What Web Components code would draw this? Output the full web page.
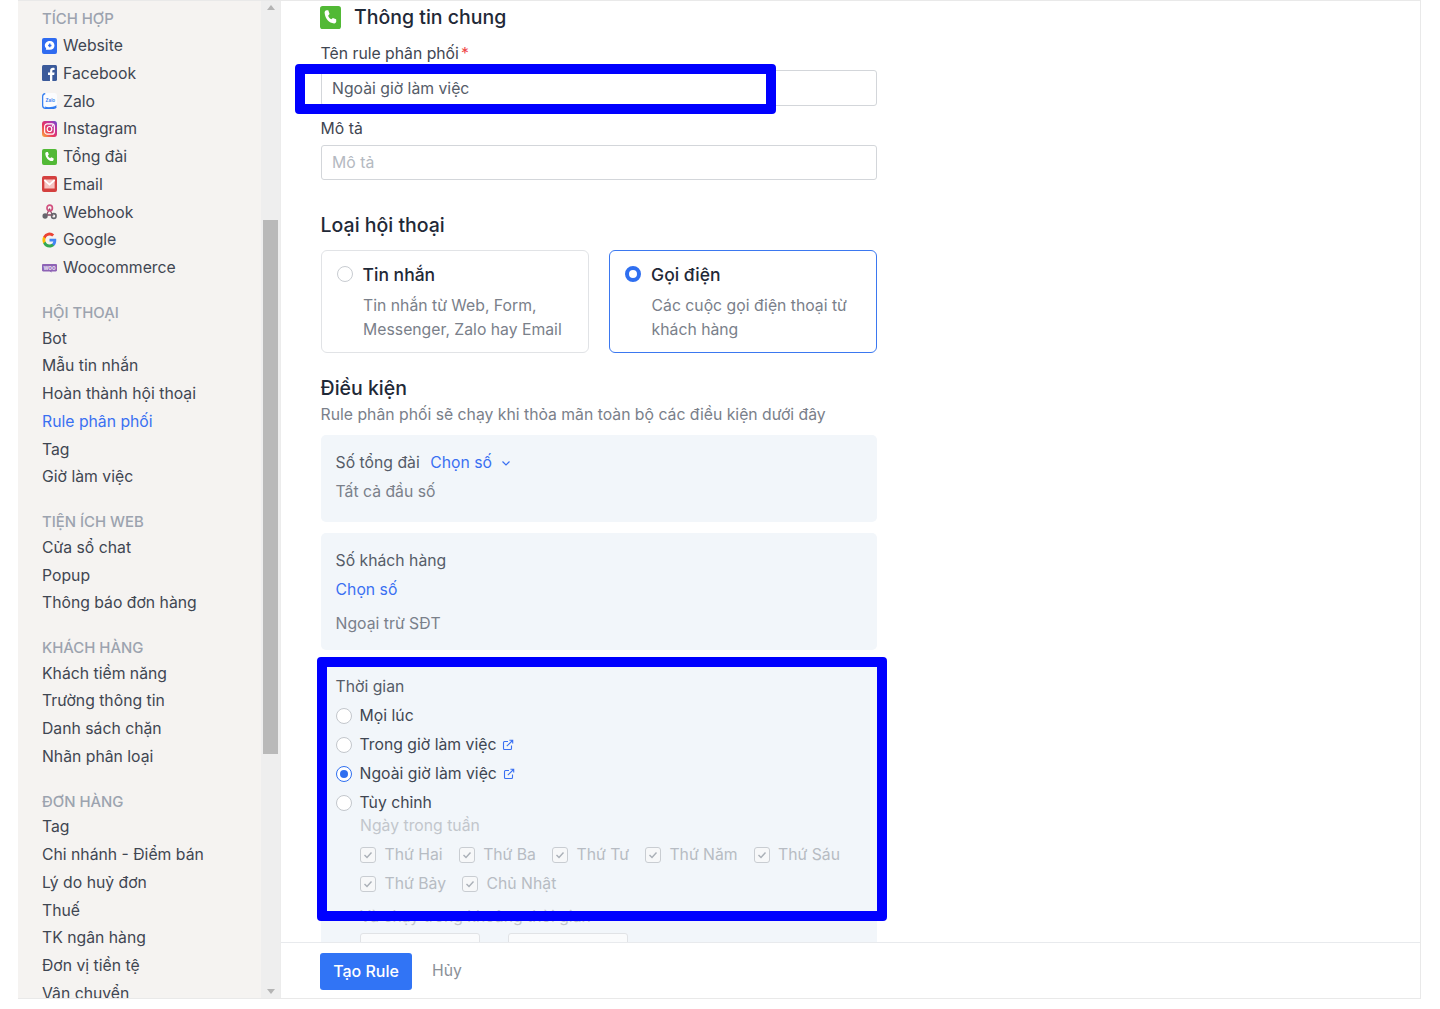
<!DOCTYPE html>
<html lang="vi">
<head>
<meta charset="utf-8">
<title>Tạo Rule</title>
<style>
  html, body { margin: 0; padding: 0; background: #fff; height: 1009px; overflow: hidden; }
  body { font-family: Inter, "Noto Sans", sans-serif; color: #374151; position: relative; }
</style>
</head>
<body>
<template id="icons">
  <svg data-i="website" viewBox="0 0 16 16" preserveAspectRatio="none"><rect width="16" height="16" rx="2" fill="#2f6bf0"/><path d="M8.500 3c2.800 0 4.800 1.900 4.800 4.400s-2 4.400-4.800 4.400H4c.5-.6.600-1.100.2-1.700C3.400 9.300 3 8.400 3 7.400 3 4.900 5.500 3 8.500 3z" fill="#fff"/><path d="M8.300 5.600v3.600M6.500 7.400h3.600" stroke="#2f6bf0" stroke-width="1.500"/></svg>
  <svg data-i="facebook" viewBox="0 0 16 16" preserveAspectRatio="none"><rect width="16" height="16" rx="1.500" fill="#3b5a9a"/><path d="M11 16v-6h2l.4-2.400H11V6.200c0-.8.300-1.200 1.200-1.200h1.200V2.900c-.4-.1-1-.1-1.700-.1-1.900 0-3.100 1.100-3.100 3.100v1.700H6.400V10h2.100v6z" fill="#fff"/></svg>
  <svg data-i="zalo" viewBox="0 0 16 16" preserveAspectRatio="none"><rect width="16" height="16" rx="2.500" fill="#fbfcfe"/><path d="M3.500 .7C1.700 .9.700 1.900.7 3.500v9c0 1.800 1.100 2.800 2.800 2.800h9c1.300 0 2.300-.5 2.800-1.500" fill="none" stroke="#2f7bf0" stroke-width="1.300"/><path d="M3 13.600c3.500 1.100 8 .9 12.500-1.300v1c-1.200 1.400-2.200 2-3.500 2H4.500c-.8 0-1.300-.6-1.500-1.700z" fill="#2f7bf0"/><text x="8.900" y="9.200" font-size="4.900" font-family="Inter, sans-serif" font-weight="600" text-anchor="middle" fill="#2f7bf0">Zalo</text></svg>
  <svg data-i="instagram" viewBox="0 0 16 16" preserveAspectRatio="none"><defs><linearGradient id="ig" x1="0" y1="1" x2="1" y2="0"><stop offset="0" stop-color="#fdb13c"/><stop offset=".4" stop-color="#e8365f"/><stop offset=".75" stop-color="#b935a8"/><stop offset="1" stop-color="#5b50d0"/></linearGradient></defs><rect width="16" height="16" rx="3" fill="url(#ig)"/><rect x="2.800" y="2.800" width="10.400" height="10.400" rx="2.800" fill="none" stroke="#fff" stroke-width="1.200"/><circle cx="8" cy="8" r="2.500" fill="none" stroke="#fff" stroke-width="1.200"/><circle cx="11.200" cy="4.900" r=".8" fill="#fff"/></svg>
  <svg data-i="phone" viewBox="0 0 16 16" preserveAspectRatio="none"><rect width="16" height="16" rx="2" fill="#52b936"/><path d="M5 2.900l1.300.1 1 2.600-1.100 1.100c.5 1.100 1.300 2 2.500 2.600l1.100-1 2.500 1 .1 1.300c0 .8-.8 1.600-1.700 1.500C6.900 11.800 4 8.900 3.500 4.700c-.1-.9.700-1.700 1.500-1.800z" fill="#fff"/></svg>
  <svg data-i="email" viewBox="0 0 16 16" preserveAspectRatio="none"><rect width="16" height="16" rx="2" fill="#d4403f"/><rect x="2.500" y="3.500" width="11" height="9" fill="#f6c4c2"/><path d="M2.500 4L8 8.700 13.500 4" fill="none" stroke="#fff" stroke-width="1.700"/></svg>
  <svg data-i="webhook" viewBox="0 0 16 16" preserveAspectRatio="none"><path d="M8.300 4.500L5.300 10M8 5l3.200 6H5" fill="none" stroke="#8a4a63" stroke-width="1.300"/><circle cx="8.200" cy="4" r="2.900" fill="none" stroke="#d2507f" stroke-width="1.800"/><circle cx="3.300" cy="12" r="2.800" fill="#66666d"/><circle cx="12.600" cy="12" r="2.400" fill="none" stroke="#66666d" stroke-width="1.700"/></svg>
  <svg data-i="google" viewBox="0 0 16 16" preserveAspectRatio="none"><path d="M15.200 8.200c0-.6 0-1-.1-1.500H8v2.900h4.100c-.2 1-.7 1.700-1.500 2.300v1.900H13c1.400-1.300 2.200-3.200 2.200-5.600z" fill="#4285f4"/><path d="M8 15.500c2 0 3.700-.7 5-1.800l-2.400-1.900c-.7.400-1.500.7-2.600.7-2 0-3.600-1.300-4.200-3.100H1.300v2A7.500 7.500 0 0 0 8 15.500z" fill="#34a853"/><path d="M3.800 9.400a4.500 4.500 0 0 1 0-2.800v-2H1.300a7.500 7.500 0 0 0 0 6.800z" fill="#fbbc05"/><path d="M8 3.500c1.100 0 2.100.4 2.900 1.100L13 2.500A7.500 7.500 0 0 0 1.300 4.600l2.500 2C4.400 4.800 6 3.500 8 3.500z" fill="#ea4335"/></svg>
  <svg data-i="woo" viewBox="0 0 16 16" preserveAspectRatio="none"><path d="M1.200 4h13.600c.7 0 1.200.5 1.200 1.200v5c0 .7-.5 1.200-1.200 1.200H10l.5 1.200-2.300-1.200h-7C.5 11.400 0 10.900 0 10.200v-5C0 4.500.5 4 1.200 4z" fill="#8e63b5"/><text x="8" y="9.800" font-size="6.400" font-family="Inter, sans-serif" font-weight="600" text-anchor="middle" fill="#f3ecf9">woo</text></svg>
</template>

<script>
// chung cho tat ca element: tao shadow root tu chuoi html
class BaseEl extends HTMLElement {
  constructor() {
    super();
    this.attachShadow({ mode: 'open' });
  }
  connectedCallback() {
    this.shadowRoot.innerHTML = this.view();
  }
  iconMarkup(name) {
    const tpl = document.getElementById('icons');
    const el = tpl.content.querySelector('[data-i="' + name + '"]');
    return el ? el.outerHTML : '';
  }
}

class AppFrame extends BaseEl {
  view() {
    return `<style>
      :host { display: flex; box-sizing: border-box; margin-left: 18px; width: 1403px; height: 999px;
        border-top: 1px solid #e9e9e9; border-bottom: 1px solid #e9e9e9; border-right: 1px solid #e9e9e9; }
    </style><slot></slot>`;
  }
}

class SideNav extends BaseEl {
  view() {
    return `<style>
      :host { display: flex; width: 262px; flex: none; height: 100%; background: #f5f3f1; border-right: 1px solid #ececec; box-sizing: content-box; }
      .list { width: 243px; flex: none; height: 100%; overflow: hidden; padding: 6.500px 0 0 24px; box-sizing: border-box; }
    </style>
    <div class="list"><slot></slot></div>
    <scroll-bar></scroll-bar>`;
  }
}

class ScrollBar extends BaseEl {
  view() {
    return `<style>
      :host { display: flex; flex-direction: column; align-items: center; width: 19px; flex: none; height: 100%; background: #eeeeee; }
      .up, .down { width: 0; height: 0; border: 4px solid transparent; }
      .up { border-bottom: 5px solid #b4b4b4; border-top: 0; margin-top: 4px; }
      .down { border-top: 5px solid #b4b4b4; border-bottom: 0; margin-bottom: 4px; }
      .thumb { width: 15px; height: 534px; margin-top: 210px; background: #b9b9b9; }
      .gap { flex: 1; }
    </style>
    <div class="up"></div><div class="thumb"></div><div class="gap"></div><div class="down"></div>`;
  }
}

class NavSection extends BaseEl {
  view() {
    return `<style>
      :host { display: block; margin-bottom: 18.400px; }
      .head { font-size: 14.900px; padding-top: 2.300px; line-height: 22px; color: #9ca3af; font-weight: 500; }
      :host(:first-child) .head { padding-top: 0; padding-bottom: 1.300px; margin-top: -1px; line-height: 24px; }
    </style>
    <div class="head">${this.getAttribute('label')}</div><slot></slot>`;
  }
}

class NavItem extends BaseEl {
  view() {
    const icon = this.getAttribute('icon');
    return `<style>
      :host { display: flex; align-items: center; gap: 6px; height: 27.750px; font-size: 15.750px; color: #3f4652; white-space: nowrap; }
      :host([active]) { color: #3a70f2; }
      svg { width: 15px; height: 16px; flex: none; display: block; }
    </style>${icon ? this.iconMarkup(icon) : ''}<slot></slot>`;
  }
}

class RuleForm extends BaseEl {
  view() {
    return `<style>
      :host { display: flex; flex-direction: column; flex: 1; min-width: 0; height: 100%; background: #fff; }
      .scroll { flex: 1; min-height: 0; overflow: hidden; padding: 0 0 0 39.600px; }
      .col { width: 558px; }
      .foot { flex: none; height: 56px; box-sizing: border-box; border-top: 1px solid #e8eaed; padding: 10px 0 0 39px; display: flex; gap: 20px; align-items: flex-start; }
    </style>
    <div class="scroll"><div class="col"><slot></slot></div></div>
    <div class="foot"><slot name="foot"></slot></div>`;
  }
}

class SectionHead extends BaseEl {
  view() {
    const icon = this.getAttribute('icon');
    return `<style>
      :host { display: flex; align-items: center; gap: 13px; font-size: 19.500px; line-height: 28px; color: #1f2937; font-weight: 500; white-space: nowrap; }
      svg { width: 21px; height: 23px; display: block; }
    </style>${icon ? this.iconMarkup(icon) : ''}<slot></slot>`;
  }
}

class TextField extends BaseEl {
  view() {
    const star = this.hasAttribute('required') ? '<span class="star">*</span>' : '';
    const val = this.getAttribute('value');
    const ph = this.getAttribute('placeholder');
    const h = this.getAttribute('box') || 36;
    return `<style>
      :host { display: block; width: 556.500px; }
      label { display: block; font-size: 15.750px; line-height: 22px; color: #3f4652; }
      .star { color: #ef4444; margin-left: 2px; }
      .box { box-sizing: border-box; height: ${h}px; margin-top: 5px; border: 1px solid #d3d6da; border-radius: 3px; background: #fff;
        display: flex; align-items: center; padding: 0 10.500px; font-size: 15.750px; }
      .v { color: #555c68; } .p { color: #b4b9c1; }
    </style>
    <label>${this.getAttribute('label')}${star}</label>
    <div class="box">${val ? `<span class="v">${val}</span>` : `<span class="p">${ph}</span>`}</div>`;
  }
}

class TypeCard extends BaseEl {
  view() {
    return `<style>
      :host { display: block; box-sizing: border-box; width: 268px; height: 102.500px; border: 1px solid #e1e3e6; border-radius: 6px; padding: 12px 15px; background: #fff; }
      :host([checked]) { border-color: #3b78f0; }
      .top { display: flex; align-items: center; gap: 10px; font-size: 17.500px; line-height: 24px; color: #1f2937; font-weight: 500; }
      .dot { width: 16px; height: 16px; box-sizing: border-box; border-radius: 50%; border: 1px solid #c8ccd1; background: #fff; flex: none; margin-top: -2px; }
      :host([checked]) .dot { border: 4.500px solid #2f6ff0; }
      .txt { margin: 7.250px 0 0 26.500px; font-size: 15.750px; line-height: 24px; color: #7a808a; }
    </style>
    <div class="top"><span class="dot"></span><slot name="title"></slot></div>
    <div class="txt"><slot></slot></div>`;
  }
}

class CondPanel extends BaseEl {
  view() {
    return `<style>
      :host { display: block; box-sizing: border-box; width: 556.500px; padding: 15px; background: #f2f6fa; border-radius: 5px; margin-bottom: 10.500px; font-size: 15.750px; color: #555c68; }
    </style><slot></slot>`;
  }
}

class RadioOpt extends BaseEl {
  view() {
    const ext = this.hasAttribute('link')
      ? `<svg viewBox="0 0 12 12"><path d="M6 2.500H2.500a1 1 0 0 0-1 1v6a1 1 0 0 0 1 1h6a1 1 0 0 0 1-1V6.500" fill="none" stroke="#3a70f2" stroke-width="1.100"/><path d="M4.800 7.200L10.500 1.500M7.400 1.300h3.300v3.300" fill="none" stroke="#3a70f2" stroke-width="1.100"/></svg>` : '';
    return `<style>
      :host { display: flex; align-items: center; height: 29px; font-size: 15.750px; color: #3f4652; white-space: nowrap; }
      .dot { width: 16px; height: 16px; box-sizing: border-box; border-radius: 50%; border: 1px solid #c3c7cc; background: #fff; flex: none; margin-right: 8px; position: relative; }
      :host([checked]) .dot { border-color: #2f6ff0; }
      :host([checked]) .dot::after { content: ""; position: absolute; left: 3px; top: 3px; width: 8px; height: 8px; border-radius: 50%; background: #2f6ff0; }
      svg { width: 12px; height: 12px; margin-left: 6px; }
    </style><span class="dot"></span><slot></slot>${ext}`;
  }
}

class DayCheck extends BaseEl {
  view() {
    return `<style>
      :host { display: inline-flex; align-items: center; gap: 8.500px; font-size: 15.750px; color: #b7bcc3; white-space: nowrap; }
      svg { width: 16px; height: 16px; display: block; }
    </style><svg viewBox="0 0 16 16"><rect x=".5" y=".5" width="15" height="15" rx="2.500" fill="#f7f8f9" stroke="#c9cdd2"/><path d="M4.500 8l2.500 2.500 4.500-5" fill="none" stroke="#aab0b7" stroke-width="1.400"/></svg><slot></slot>`;
  }
}

class SubmitBtn extends BaseEl {
  view() {
    return `<style>
      :host { display: flex; align-items: center; justify-content: center; box-sizing: border-box; width: 92px; height: 37px; padding-bottom: 1px; border-radius: 3px; background: #3174f5; color: #fff; font-size: 16px; font-weight: 500; }
    </style><slot></slot>`;
  }
}

class MarkBox extends BaseEl {
  view() {
    return `<style>
      :host { display: block; position: absolute; box-sizing: border-box; border: 10px solid #0000ff; border-radius: 4px; pointer-events: none; }
    </style>`;
  }
}

customElements.define('app-frame', AppFrame);
customElements.define('side-nav', SideNav);
customElements.define('scroll-bar', ScrollBar);
customElements.define('nav-section', NavSection);
customElements.define('nav-item', NavItem);
customElements.define('rule-form', RuleForm);
customElements.define('section-head', SectionHead);
customElements.define('text-field', TextField);
customElements.define('type-card', TypeCard);
customElements.define('cond-panel', CondPanel);
customElements.define('radio-opt', RadioOpt);
customElements.define('day-check', DayCheck);
customElements.define('submit-btn', SubmitBtn);
customElements.define('mark-box', MarkBox);
</script>

<app-frame>
  <side-nav>
    <nav-section label="TÍCH HỢP">
      <nav-item icon="website">Website</nav-item>
      <nav-item icon="facebook">Facebook</nav-item>
      <nav-item icon="zalo">Zalo</nav-item>
      <nav-item icon="instagram">Instagram</nav-item>
      <nav-item icon="phone">Tổng đài</nav-item>
      <nav-item icon="email">Email</nav-item>
      <nav-item icon="webhook">Webhook</nav-item>
      <nav-item icon="google">Google</nav-item>
      <nav-item icon="woo">Woocommerce</nav-item>
    </nav-section>
    <nav-section label="HỘI THOẠI">
      <nav-item>Bot</nav-item>
      <nav-item>Mẫu tin nhắn</nav-item>
      <nav-item>Hoàn thành hội thoại</nav-item>
      <nav-item active>Rule phân phối</nav-item>
      <nav-item>Tag</nav-item>
      <nav-item>Giờ làm việc</nav-item>
    </nav-section>
    <nav-section label="TIỆN ÍCH WEB">
      <nav-item>Cửa sổ chat</nav-item>
      <nav-item>Popup</nav-item>
      <nav-item>Thông báo đơn hàng</nav-item>
    </nav-section>
    <nav-section label="KHÁCH HÀNG">
      <nav-item>Khách tiềm năng</nav-item>
      <nav-item>Trường thông tin</nav-item>
      <nav-item>Danh sách chặn</nav-item>
      <nav-item>Nhãn phân loại</nav-item>
    </nav-section>
    <nav-section label="ĐƠN HÀNG">
      <nav-item>Tag</nav-item>
      <nav-item>Chi nhánh - Điểm bán</nav-item>
      <nav-item>Lý do huỷ đơn</nav-item>
      <nav-item>Thuế</nav-item>
      <nav-item>TK ngân hàng</nav-item>
      <nav-item>Đơn vị tiền tệ</nav-item>
      <nav-item>Vận chuyển</nav-item>
    </nav-section>
  </side-nav>

  <rule-form>
    <section-head icon="phone" style="margin-top:2px;margin-left:-.6px">Thông tin chung</section-head>
    <text-field style="margin-top:12px" label="Tên rule phân phối" required value="Ngoài giờ làm việc"></text-field>
    <text-field style="margin-top:12px" label="Mô tả" placeholder="Mô tả" box="35"></text-field>
    <section-head style="margin-top:31px">Loại hội thoại</section-head>
    <div style="display:flex;gap:20.500px;margin-top:11px">
      <type-card><span slot="title">Tin nhắn</span>Tin nhắn từ Web, Form, Messenger, Zalo hay Email</type-card>
      <type-card checked><span slot="title">Gọi điện</span>Các cuộc gọi điện thoại từ khách hàng</type-card>
    </div>
    <section-head style="margin-top:21.500px">Điều kiện</section-head>
    <div style="font-size:15.750px;line-height:24px;color:#7a808a;margin:1px 0 8px">Rule phân phối sẽ chạy khi thỏa mãn toàn bộ các điều kiện dưới đây</div>
    <cond-panel style="height:87px">
      <div style="line-height:26px;color:#555c68">Số tổng đài <span style="color:#3a70f2;margin-left:6px">Chọn số</span>
        <svg width="10" height="10" viewBox="0 0 10 10" style="margin-left:5px"><path d="M1.500 3.500L5 7l3.500-3.500" fill="none" stroke="#3a70f2" stroke-width="1.200"/></svg></div>
      <div style="line-height:31px;color:#7a808a">Tất cả đầu số</div>
    </cond-panel>
    <cond-panel style="height:117px">
      <div style="line-height:26px">Số khách hàng</div>
      <div style="line-height:31px;color:#3a70f2">Chọn số</div>
      <div style="line-height:37px;color:#7a808a">Ngoại trừ SĐT</div>
    </cond-panel>
    <cond-panel style="height:330px;padding-top:13px">
      <div style="line-height:28px">Thời gian</div>
      <radio-opt>Mọi lúc</radio-opt>
      <radio-opt link>Trong giờ làm việc</radio-opt>
      <radio-opt checked link>Ngoài giờ làm việc</radio-opt>
      <radio-opt>Tùy chỉnh</radio-opt>
      <div style="margin:-2px 0 0 24.500px;color:#c2c6cc;line-height:22px">Ngày trong tuần</div>
      <div style="margin:3px 0 0 24.500px;display:flex;flex-wrap:wrap;gap:0 16px;line-height:29px;width:505px">
        <day-check>Thứ Hai</day-check><day-check>Thứ Ba</day-check><day-check>Thứ Tư</day-check><day-check>Thứ Năm</day-check><day-check>Thứ Sáu</day-check>
        <day-check>Thứ Bảy</day-check><day-check>Chủ Nhật</day-check>
      </div>
      <div style="margin:8px 0 0 24.500px;color:#c2c6cc;line-height:22px">Và chạy trong khoảng thời gian</div>
      <div style="margin:5px 0 0 24.500px;display:flex;gap:28px">
        <div style="width:120px;height:36px;box-sizing:border-box;border:1px solid #e1e3e6;border-radius:3px;background:#fafbfc"></div>
        <div style="width:120px;height:36px;box-sizing:border-box;border:1px solid #e1e3e6;border-radius:3px;background:#fafbfc"></div>
      </div>
    </cond-panel>
    <submit-btn slot="foot">Tạo Rule</submit-btn>
    <span slot="foot" style="font-size:15.750px;line-height:36px;color:#8b9098">Hủy</span>
  </rule-form>
</app-frame>

<mark-box style="left:295px;top:64px;width:481px;height:50px"></mark-box>
<mark-box style="left:317px;top:657px;width:569.500px;height:264px"></mark-box>
</body>
</html>
